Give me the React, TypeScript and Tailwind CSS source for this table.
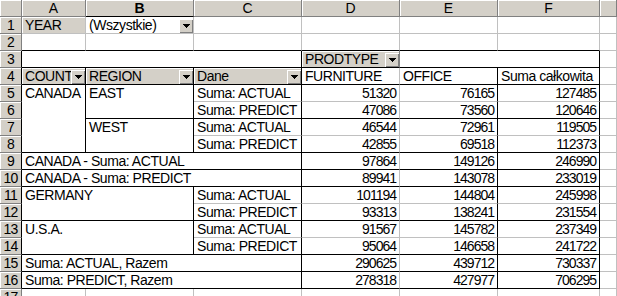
import React from "react";

const font = "font-['Liberation_Sans',Arial,sans-serif]";

const gg = "border-r-[#c0c0c0] border-b-[#c0c0c0]";
const gk = "border-r-[#c0c0c0] border-b-black";
const kk = "border-r-black border-b-black";
const kg = "border-r-black border-b-[#c0c0c0]";

function Arrow() {
  return (
    <span className="absolute right-0 bottom-0 flex h-[14px] w-[14px] items-center justify-center bg-[#d4d0c8] shadow-[inset_1px_1px_0_#ffffff,inset_-1px_-1px_0_#808080]">
      <svg width="7" height="4" viewBox="0 0 7 4" shapeRendering="crispEdges">
        <path d="M0 0h7v1h-1v1h-1v1h-1v1h-1v-1h-1v-1h-1v-1h-1z" fill="#000" />
      </svg>
    </span>
  );
}

function C({ c, children }: { c: string; children?: React.ReactNode }) {
  return (
    <div className={"relative border-r border-b pt-[1px] pl-[3px] whitespace-nowrap tracking-[-0.45px] " + c}>
      {children}
    </div>
  );
}

function Num({ c, v }: { c: string; v: number }) {
  return <div className={"border-r border-b pt-[1px] pr-[3px] text-right tracking-[-1px] " + c}>{v}</div>;
}

const cols = [
  { c: "col-start-2", l: "A" },
  { c: "col-start-3", l: "B" },
  { c: "col-start-4", l: "C" },
  { c: "col-start-5", l: "D" },
  { c: "col-start-6", l: "E" },
  { c: "col-start-7", l: "F" },
  { c: "col-start-8", l: "" },
];

const rowStarts = [
  "row-start-2", "row-start-3", "row-start-4", "row-start-5", "row-start-6", "row-start-7",
  "row-start-8", "row-start-9", "row-start-10", "row-start-11", "row-start-12", "row-start-13",
  "row-start-14", "row-start-15", "row-start-16", "row-start-17", "row-start-18",
];

const data = [
  { r: "row-start-6", soft: true, v: [51320, 76165, 127485] },
  { r: "row-start-7", soft: false, v: [47086, 73560, 120646] },
  { r: "row-start-8", soft: true, v: [46544, 72961, 119505] },
  { r: "row-start-9", soft: false, v: [42855, 69518, 112373] },
  { r: "row-start-10", soft: false, v: [97864, 149126, 246990] },
  { r: "row-start-11", soft: false, v: [89941, 143078, 233019] },
  { r: "row-start-12", soft: true, v: [101194, 144804, 245998] },
  { r: "row-start-13", soft: false, v: [93313, 138241, 231554] },
  { r: "row-start-14", soft: true, v: [91567, 145782, 237349] },
  { r: "row-start-15", soft: false, v: [95064, 146658, 241722] },
  { r: "row-start-16", soft: false, v: [290625, 439712, 730337] },
  { r: "row-start-17", soft: false, v: [278318, 427977, 706295] },
];

const btn = "bg-[#d4d0c8] shadow-[inset_1px_1px_0_#ffffff]";

export default function App() {
  return (
    <div className={"h-[296px] w-[617px] overflow-hidden bg-white text-[14px] leading-[15px] text-black " + font}>
      <div className="grid grid-cols-[22px_64px_108px_108px_98px_98px_102px_17px] grid-rows-[repeat(18,17px)]">
        {/* column headers */}
        <div className="col-start-1 row-start-1 border-r border-b border-r-[#808080] border-b-[#808080] bg-[#d4d0c8] shadow-[inset_1px_1px_0_#ffffff]" />
        {cols.map((h) => (
          <div
            key={h.c}
            className={
              "row-start-1 flex items-center justify-center border-r border-b border-r-[#808080] bg-[#d4d0c8] text-[14px] shadow-[inset_1px_1px_0_#ffffff] " +
              h.c +
              (h.l === "B" ? " border-b-black font-bold" : " border-b-[#808080]")
            }
          >
            {h.l}
          </div>
        ))}

        {/* row headers */}
        {rowStarts.map((r, i) => (
          <div
            key={r}
            className={
              "col-start-1 flex items-center justify-center border-r border-b border-b-[#808080] bg-[#d4d0c8] tracking-[-0.8px] shadow-[inset_1px_1px_0_#ffffff] " +
              r +
              (i >= 2 && i <= 15 ? " border-r-black" : " border-r-[#808080]")
            }
          >
            {i + 1}
          </div>
        ))}

        {/* row 1 */}
        <C c={"col-start-2 row-start-2 " + gg + " " + btn}>YEAR</C>
        <C c={"col-start-3 row-start-2 " + gg}>
          (Wszystkie)
          <Arrow />
        </C>
        <C c={"col-start-4 row-start-2 " + gg} />
        <C c={"col-start-5 row-start-2 " + gg} />
        <C c={"col-start-6 row-start-2 " + gg} />
        <C c={"col-start-7 row-start-2 " + gg} />

        {/* row 2 */}
        <C c={"col-start-2 row-start-3 " + gk} />
        <C c={"col-start-3 row-start-3 " + gk} />
        <C c={"col-start-4 row-start-3 " + gk} />
        <C c={"col-start-5 row-start-3 " + gk} />
        <C c={"col-start-6 row-start-3 " + gk} />
        <C c={"col-start-7 row-start-3 " + gk} />

        {/* row 3 */}
        <C c={"col-start-2 col-span-3 row-start-4 " + kk} />
        <C c={"col-start-5 row-start-4 border-r-[#808080] border-b-black " + btn}>
          PRODTYPE
          <Arrow />
        </C>
        <C c={"col-start-6 col-span-2 row-start-4 " + kk} />

        {/* row 4 */}
        <C c={"col-start-2 row-start-5 overflow-hidden " + kk + " " + btn}>
          COUNT
          <Arrow />
        </C>
        <C c={"col-start-3 row-start-5 " + kk + " " + btn}>
          REGION
          <Arrow />
        </C>
        <C c={"col-start-4 row-start-5 " + kk + " " + btn}>
          Dane
          <Arrow />
        </C>
        <C c={"col-start-5 row-start-5 " + gk}>FURNITURE</C>
        <C c={"col-start-6 row-start-5 " + kk}>OFFICE</C>
        <C c={"col-start-7 row-start-5 " + kk}>Suma całkowita</C>

        {/* row labels */}
        <C c={"col-start-2 row-start-6 row-span-4 " + kk}>CANADA</C>
        <C c={"col-start-3 row-start-6 row-span-2 " + kk}>EAST</C>
        <C c={"col-start-3 row-start-8 row-span-2 " + kk}>WEST</C>
        <C c={"col-start-4 row-start-6 " + kg}>Suma: ACTUAL</C>
        <C c={"col-start-4 row-start-7 " + kk}>Suma: PREDICT</C>
        <C c={"col-start-4 row-start-8 " + kg}>Suma: ACTUAL</C>
        <C c={"col-start-4 row-start-9 " + kk}>Suma: PREDICT</C>

        <C c={"col-start-2 col-span-3 row-start-10 " + kk}>CANADA - Suma: ACTUAL</C>
        <C c={"col-start-2 col-span-3 row-start-11 " + kk}>CANADA - Suma: PREDICT</C>

        <C c={"col-start-2 col-span-2 row-start-12 row-span-2 " + kk}>GERMANY</C>
        <C c={"col-start-4 row-start-12 " + kg}>Suma: ACTUAL</C>
        <C c={"col-start-4 row-start-13 " + kk}>Suma: PREDICT</C>

        <C c={"col-start-2 col-span-2 row-start-14 row-span-2 " + kk}>U.S.A.</C>
        <C c={"col-start-4 row-start-14 " + kg}>Suma: ACTUAL</C>
        <C c={"col-start-4 row-start-15 " + kk}>Suma: PREDICT</C>

        <C c={"col-start-2 col-span-3 row-start-16 " + kk}>Suma: ACTUAL, Razem</C>
        <C c={"col-start-2 col-span-3 row-start-17 " + kk}>Suma: PREDICT, Razem</C>

        {/* values */}
        {data.map((d) => (
          <React.Fragment key={d.r}>
            <Num c={"col-start-5 " + d.r + " " + (d.soft ? gg : gk)} v={d.v[0]} />
            <Num c={"col-start-6 " + d.r + " " + (d.soft ? kg : kk)} v={d.v[1]} />
            <Num c={"col-start-7 " + d.r + " " + (d.soft ? kg : kk)} v={d.v[2]} />
          </React.Fragment>
        ))}

        {/* column G */}
        {rowStarts.map((r) => (
          <C key={"g" + r} c={"col-start-8 " + r + " " + gg} />
        ))}

        {/* row 17 */}
        <C c={"col-start-2 row-start-18 " + gg} />
        <C c={"col-start-3 row-start-18 " + gg} />
        <C c={"col-start-4 row-start-18 " + gg} />
        <C c={"col-start-5 row-start-18 " + gg} />
        <C c={"col-start-6 row-start-18 " + gg} />
        <C c={"col-start-7 row-start-18 " + gg} />
      </div>
    </div>
  );
}
